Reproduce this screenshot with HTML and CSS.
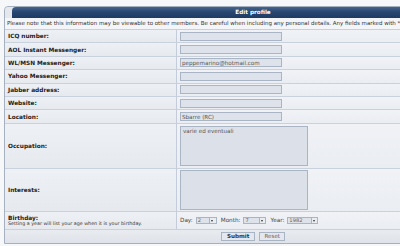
FILE: index.html
```html
<!DOCTYPE html>
<html lang="en">
<head>
<meta charset="UTF-8">
<meta name="viewport" content="width=device-width, initial-scale=1.0">
<title>Edit profile</title>
<link rel="stylesheet" href="styles.css">
</head>
<body>
  <form class="panel" id="profile-form">
    <div class="head"><div class="bar">Edit profile</div></div>
    <div class="note">Please note that this information may be viewable to other members. Be careful when including any personal details. Any fields marked with * are required.</div>

    <div class="grid">
      <div class="lbl">ICQ number:</div>
      <div class="val"><input class="field" type="text" name="icq"></div>

      <div class="lbl">AOL Instant Messenger:</div>
      <div class="val"><input class="field" type="text" name="aim"></div>

      <div class="lbl">WL/MSN Messenger:</div>
      <div class="val"><input class="field" type="text" name="msn" value="peppemarino@hotmail.com"></div>

      <div class="lbl">Yahoo Messenger:</div>
      <div class="val"><input class="field" type="text" name="yim"></div>

      <div class="lbl">Jabber address:</div>
      <div class="val"><input class="field" type="text" name="jabber"></div>

      <div class="lbl">Website:</div>
      <div class="val"><input class="field" type="text" name="website"></div>

      <div class="lbl">Location:</div>
      <div class="val"><input class="field" type="text" name="location" value="Sbarre (RC)"></div>

      <div class="lbl tall">Occupation:</div>
      <div class="val tall"><textarea class="area" name="occupation">varie ed eventuali</textarea></div>

      <div class="lbl tall2">Interests:</div>
      <div class="val tall2"><textarea class="area" name="interests"></textarea></div>

      <div class="lbl bday">
        <div>
          <b>Birthday:</b>
          <span class="hint">Setting a year will list your age when it is your birthday.</span>
        </div>
      </div>
      <div class="val bday">
        <span class="dlabel">Day:</span>
        <span class="sel w-day"><span class="sel-val">2</span><span class="sel-btn"></span></span>
        <span class="dlabel">Month:</span>
        <span class="sel w-month"><span class="sel-val">7</span><span class="sel-btn"></span></span>
        <span class="dlabel">Year:</span>
        <span class="sel w-year"><span class="sel-val">1982</span><span class="sel-btn"></span></span>
      </div>
    </div>

    <div class="foot">
      <button type="submit" class="btn main">Submit</button>
      <button type="reset" class="btn">Reset</button>
    </div>
  </form>
</body>
</html>
```

FILE: styles.css
```css
body {
  margin: 0;
  padding: 6px 0 0 4px;
  background-color: #f6f7f9;
  font-family: "DejaVu Sans", Verdana, sans-serif;
  color: #2b2b2b;
  overflow: hidden;
}
.panel {
  width: 496px;
  border: 1px solid #a5b1c1;
  border-radius: 4px 4px 0 0;
  background-color: #eef1f5;
  margin: 0;
}
.head {
  height: 11px;
  background-color: #e4e8ed;
  border-radius: 4px 0 0 0;
}
.head .bar {
  margin-left: 7px;
  height: 11px;
  border-radius: 4px 0 0 0;
  background: linear-gradient(#46658b, #284670 45%, #1e3b62);
  color: #fff;
  font-weight: bold;
  font-size: 5.7px;
  line-height: 11px;
  text-align: center;
  padding-right: 7px;
}
.note {
  height: 11px;
  line-height: 11px;
  padding-left: 2px;
  font-size: 5.5px;
  color: #333;
  white-space: nowrap;
  overflow: hidden;
  background-color: #f3f5f8;
  border-bottom: 1px solid #c6cfdb;
}
.grid {
  display: grid;
  grid-template-columns: 172px 1fr;
}
.lbl,
.val {
  height: 12.4px;
  display: flex;
  align-items: center;
  border-bottom: 1px solid #c9d1dc;
}
.lbl {
  padding-left: 3px;
  border-right: 1px solid #c3ccd8;
  background: linear-gradient(#edf0f4, #e6e9ee);
  font-weight: bold;
  font-size: 5.8px;
  color: #222;
}
.val {
  padding-left: 3px;
  background: linear-gradient(#f0f2f6, #eaedf2);
}
.lbl.tall,
.val.tall {
  height: 44.2px;
}
.lbl.tall2,
.val.tall2 {
  height: 42px;
}
.lbl.bday,
.val.bday {
  height: 17px;
}
.field {
  box-sizing: border-box;
  width: 102px;
  height: 9px;
  margin: 0;
  padding: 0 1px;
  border: 1px solid #a9b4c4;
  background-color: #dee3eb;
  font-family: "DejaVu Sans", Verdana, sans-serif;
  font-size: 5.6px;
  color: #555;
  outline: none;
}
.area {
  box-sizing: border-box;
  width: 128px;
  height: 40px;
  margin: 0;
  padding: 1px 2px;
  border: 1px solid #a9b4c4;
  background-color: #dce1e9;
  font-family: "DejaVu Sans", Verdana, sans-serif;
  font-size: 5.6px;
  color: #555;
  resize: none;
  outline: none;
}
.bday b {
  display: block;
  font-size: 5.8px;
  line-height: 6px;
}
.bday .hint {
  display: block;
  font-weight: normal;
  font-size: 4.8px;
  line-height: 5px;
  color: #333;
}
.dlabel {
  font-size: 5.7px;
  color: #444;
  margin-right: 3px;
}
.sel {
  box-sizing: border-box;
  display: inline-flex;
  height: 7.5px;
  margin-right: 4px;
  border: 1px solid #a9b4c4;
  background-color: #dee3eb;
}
.w-day { width: 21px; }
.w-month { width: 23px; }
.w-year { width: 31px; }
.sel-val {
  flex: 1;
  padding-left: 1px;
  font-size: 5.2px;
  line-height: 5.5px;
  color: #666;
}
.sel-btn {
  position: relative;
  width: 5.5px;
  border-left: 1px solid #a9b4c4;
  background-color: #e9edf2;
}
.sel-btn::after {
  content: "";
  position: absolute;
  left: 1px;
  top: 2px;
  border-left: 1.5px solid transparent;
  border-right: 1.5px solid transparent;
  border-top: 2px solid #333;
}
.foot {
  height: 13px;
  display: flex;
  justify-content: center;
  align-items: center;
  gap: 4px;
  background: linear-gradient(#e8ebf0, #dfe3e9);
}
.btn {
  box-sizing: border-box;
  height: 9px;
  margin: 0;
  padding: 0 4px;
  border: 1px solid #a8b3c3;
  background-color: #e4e8ee;
  font-family: "DejaVu Sans", Verdana, sans-serif;
  font-size: 5.6px;
  line-height: 6px;
  color: #666;
  cursor: pointer;
}
.btn.main {
  font-weight: bold;
  color: #333;
  padding: 0 5px;
}
```
